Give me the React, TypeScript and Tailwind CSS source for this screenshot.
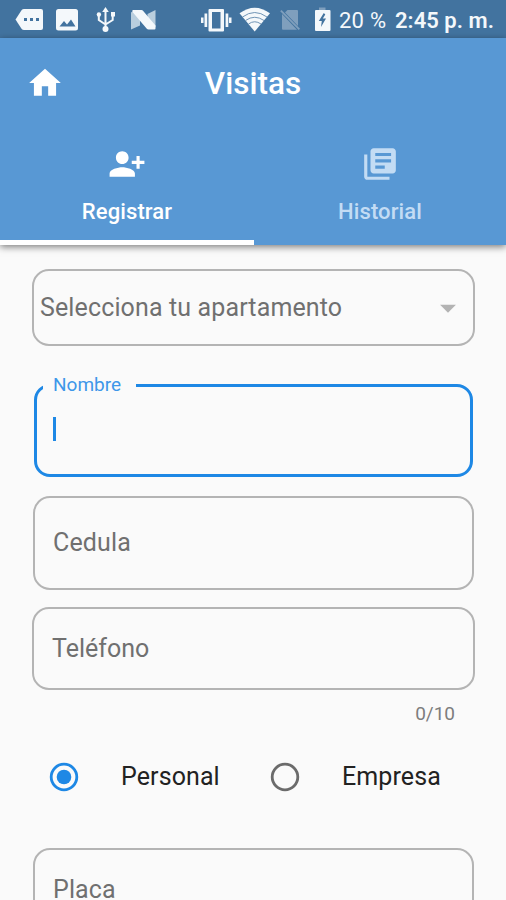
import { MdArrowDropDown, MdHome, MdLibraryBooks, MdPersonAddAlt1 } from "react-icons/md";
import type { ReactNode } from "react";

function StatusBar() {
  return (
    <div className="h-[38px] bg-[#42739f] text-white">
      <svg className="block h-[38px] w-full" viewBox="0 0 506 38" fill="#f4f8fb">
        {/* message */}
        <path d="M24 9h17q2 0 2 2v17q0 2-2 2H24q-1.500 0-2.300-1L15.500 19.500 21.700 10Q22.500 9 24 9z" />
        <path fill="#42739f" d="M24 18h3v3h-3zM30 18h3v3h-3zM36 18h3v3h-3z" />
        {/* image */}
        <rect x="56" y="9" width="22" height="21.500" rx="2.500" />
        <path fill="#42739f" d="M59.500 26.500l4.500-5.500 3 3.500 4-5 4.500 7z" />
        {/* usb */}
        <g stroke="#f4f8fb" strokeWidth="2" fill="none">
          <path d="M105.500 11v18M98.800 15.500v4.500l6.700 4.500M112.700 15v5l-7.200 4.500" />
        </g>
        <path d="M105.500 7l3.300 5h-6.600zM111 12h4v4.500h-4z" />
        <circle cx="98.900" cy="14.500" r="2.200" />
        <circle cx="105.500" cy="29" r="3" />
        {/* android n */}
        <path fill="#b9cede" d="M131 12.500l3-2 6 5v10l-9 4zM147.500 14l8-4v17l-2 1.500-6-6z" />
        <path d="M132.500 10h9q1 0 1.500.7l12.500 14.800v3q0 1-1 1h-6q-1 0-1.700-.8L132.500 12z" />
        {/* vibrate */}
        <path fillRule="evenodd" d="M209.500 9h13.500q1 0 1 1v20.500q0 1-1 1h-13.500q-1 0-1-1V10q0-1 1-1zm2.500 3v16.500h8.500V12z" />
        <path d="M204.500 13.500h2.700v13.500h-2.700zM201 17.500h2.500v5.500H201zM225.600 13.500h2.700v13.500h-2.700zM229 17.500h2.500v5.500H229z" />
        {/* wifi */}
        <path d="M239.500 13.300Q254.700 2 270 13.300L254.700 31.500z" />
        <g stroke="#6f94b6" strokeWidth="1" fill="none">
          <path d="M242.500 17q12.200-9 24.500 0M245.500 20.500q9.200-6.500 18.500 0M248.500 24q6.200-4.500 12.500 0" />
        </g>
        {/* no sim */}
        <g fill="#7f9fbd">
          <path d="M287.500 10H297q1 0 1 1v15L285 12.500z" />
          <path d="M282 14l15 15.800H283q-1 0-1-1z" />
          <path d="M281.500 10l18.500 18.800-1.300 1.300L280.200 11.300z" />
        </g>
        {/* battery */}
        <path fill="#7f9fbd" d="M319 7.500h6.500V10H319z" />
        <path d="M316 10h13.500q1 0 1 1v19q0 1-1 1H316q-1 0-1-1V11q0-1 1-1z" />
        <path fill="#42739f" d="M323.800 13l-5 8h3l-.8 6 5-8.500h-3.200l2.500-4z" />
        <text x="339" y="28" fontSize="22" fontFamily="Roboto" textLength="47">20 %</text>
        <text x="395" y="28" fontSize="22" fontWeight="600" fontFamily="Roboto" textLength="99">2:45 p. m.</text>
      </svg>
    </div>
  );
}

function Tab({ icon, label, active }: { icon: ReactNode; label: string; active?: boolean }) {
  return (
    <div className={active ? "flex w-[254px] flex-col items-center border-b-5 border-white text-white" : "flex flex-1 flex-col items-center border-b-5 border-transparent text-[#c3dcf4]"}>
      <div className="mt-[18px]">{icon}</div>
      <span className="mt-[16px] text-[22px] leading-[26px] font-medium tracking-[0.1px]">{label}</span>
    </div>
  );
}

function Radio({ label, checked }: { label: string; checked?: boolean }) {
  return (
    <label className="flex w-[221px] shrink-0 items-center">
      <svg className="size-[30px]" viewBox="0 0 30 30" fill="none">
        <circle cx="15" cy="15" r="12.800" stroke={checked ? "#1e88e5" : "#6b6b6b"} strokeWidth="2.800" />
        {checked && <circle cx="15" cy="15" r="7.300" fill="#1e88e5" />}
      </svg>
      <span className="ml-[42px] text-[25px] leading-[30px] tracking-[0.1px] text-[#222]">{label}</span>
    </label>
  );
}

export default function App() {
  return (
    <div className="h-[900px] w-[506px] overflow-hidden bg-[#fafafa] font-['Roboto',sans-serif]">
      <StatusBar />
      <header className="flex h-[207px] flex-col bg-[#5898d4] shadow-[0_2px_7px_rgba(0,0,0,0.5)]">
        <div className="grid h-[89px] grid-cols-[1fr_auto_1fr] items-center text-white">
          <MdHome className="ml-[26px] size-[38px]" />
          <h1 className="pt-[3px] text-[31.500px] font-medium">Visitas</h1>
        </div>
        <nav className="flex flex-1">
          <Tab active icon={<MdPersonAddAlt1 className="size-[38px]" />} label="Registrar" />
          <Tab icon={<MdLibraryBooks className="size-[38px]" />} label="Historial" />
        </nav>
      </header>

      <form className="flex flex-col pt-6 pr-[31px] pl-8 text-[25px] leading-[30px] text-[#707070]">
        <div className="flex h-[77px] items-center justify-between rounded-[17px] border-2 border-[#b4b4b4] px-[6px]">
          <span className="tracking-[0.13px]">Selecciona tu apartamento</span>
          <MdArrowDropDown className="size-[38px] text-[#b3b3b3]" />
        </div>

        <fieldset className="mr-[2px] ml-[2px] mt-[29px] h-[102px] rounded-[16px] border-3 border-[#1e88e5] pl-[6px]">
          <legend className="h-[20px] pr-[15px] pl-[10px] text-[19px] leading-[20px] text-[#3e97e9]">Nombre</legend>
          <div className="mt-[22px] ml-[10px] h-[24px] w-[3px] bg-[#1e88e5]" />
        </fieldset>

        <div className="mr-[1px] ml-[1px] mt-[19px] flex h-[94px] items-center rounded-[17px] border-2 border-[#b4b4b4] pl-[18px] tracking-[0.13px]">Cedula</div>
        <div className="mt-[17px] flex h-[83px] items-center rounded-[17px] border-2 border-[#b4b4b4] pl-[18px]">Teléfono</div>
        <div className="mt-[12px] mr-[20px] text-right text-[19px] leading-[24px] text-[#7d7d7d]">0/10</div>

        <div className="mt-[36px] flex pl-[17px]">
          <Radio checked label="Personal" />
          <Radio label="Empresa" />
        </div>

        <div className="mr-[1px] ml-[1px] mt-[56px] flex h-[94px] items-center rounded-[17px] border-2 border-[#b4b4b4] pb-[11px] pl-[18px] tracking-[0.13px]">Placa</div>
      </form>
    </div>
  );
}
